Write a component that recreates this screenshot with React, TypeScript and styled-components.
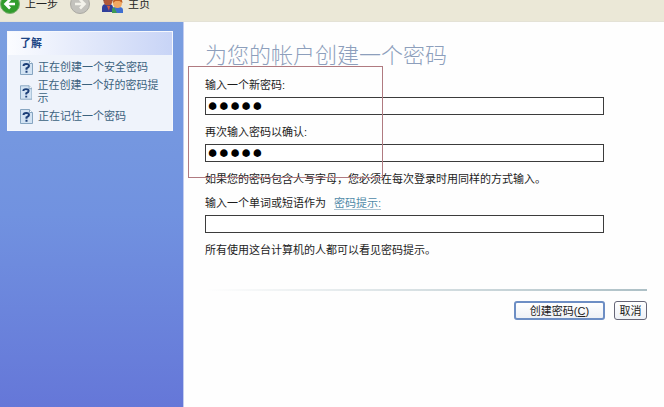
import React from "react";
import styled, { createGlobalStyle } from "styled-components";

const GlobalStyle = createGlobalStyle`
  * { box-sizing: border-box; }
  body {
    margin: 0;
    background: #fefefe;
    color: #1c1c1c;
    font: 11px/14px "Liberation Sans", "Noto Sans CJK SC", sans-serif;
  }
`;

const Page = styled.div`
  display: flex;
  flex-direction: column;
  min-height: 100vh;
`;

const Toolbar = styled.header`
  height: 22px;
  overflow: hidden;
  background: #ebe8d7;
  border-bottom: 1px solid #e4e2d6;
`;

const ToolbarRow = styled.div`
  display: flex;
  align-items: center;
  height: 22px;
  margin-top: -7px;
`;

const ToolButton = styled.button`
  display: flex;
  align-items: center;
  gap: 5px;
  padding: 0;
  margin-right: 12px;
  border: 0;
  background: none;
  font: inherit;
  color: #222;
`;

const Columns = styled.div`
  display: flex;
  flex: 1;
`;

const Sidebar = styled.aside`
  flex: 0 0 184px;
  padding: 9px 10px 0 7px;
  border-right: 1px solid #c3cdf0;
  background: linear-gradient(#7b9fe0 0%, #7192e0 50%, #6577d8 100%);
`;

const Card = styled.section`
  background: #eff3fb;
  border: 1px solid #f6f8fd;
`;

const CardTitle = styled.h2`
  margin: 0;
  padding: 4px 12px 5px;
  background: linear-gradient(90deg, #fbfcff, #c8d4f6);
  color: #1d4585;
  font-size: 11px;
  line-height: 14px;
  font-weight: 700;
`;

const TopicList = styled.ul`
  list-style: none;
  margin: 0;
  padding: 5px 8px 6px 12px;
`;

const Topic = styled.li`
  display: flex;
  align-items: center;
  gap: 5px;
  margin-bottom: 4px;
  &:last-child { margin-bottom: 0; }
`;

const TopicLink = styled.a`
  color: #3b627e;
  text-decoration: none;
  line-height: 13px;
`;

const Content = styled.main`
  flex: 1;
  min-width: 0;
  padding: 20px 17px 0 21px;
`;

const Title = styled.h1`
  margin: 0 0 8px;
  color: #8d9fbc;
  font-size: 22px;
  line-height: 28px;
  font-weight: 300;
`;

const Form = styled.form`
  position: relative;
`;

const Field = styled.div`
  margin: 0 43px 10px 0;
`;

const Label = styled.label`
  display: block;
  margin-bottom: 5px;
`;

const Input = styled.input`
  display: block;
  width: 100%;
  height: 18px;
  padding: 0 2px;
  border: 1px solid #3c3c3c;
  border-radius: 0;
  background: #fff;
  color: #000;
  outline: 0;
  font: inherit;

  &[type="password"] {
    padding: 0 1px;
    font: 19px/16px "DejaVu Sans", sans-serif;
    -webkit-text-stroke: 2px #000;
  }
`;

const Note = styled.p`
  margin: 0 0 10px;
`;

const HintLink = styled.a`
  margin-left: 5px;
  color: #4f89a8;
  text-decoration: none;
  border-bottom: 1px solid #a9c3d2;
`;

const Highlight = styled.div`
  position: absolute;
  left: -17px;
  top: -12px;
  width: 195px;
  height: 112px;
  border: 1px solid #b07a80;
  pointer-events: none;
`;

const Divider = styled.hr`
  height: 2px;
  margin: 32px 0 10px;
  border: 0;
  background: linear-gradient(90deg, #fefefe, #adc0c6);
`;

const Actions = styled.div`
  display: flex;
  justify-content: flex-end;
  gap: 9px;
`;

const ActionButton = styled.button<{ $primary?: boolean }>`
  height: 19px;
  width: ${(p) => (p.$primary ? "91px" : "33px")};
  padding: 0;
  border: ${(p) => (p.$primary ? "2px solid #6d8ec4" : "1px solid #667")};
  border-radius: 3px;
  background: linear-gradient(#fff, #eef1f6);
  color: #222;
  font: inherit;
  line-height: 14px;
  white-space: nowrap;
`;

const BackIcon = () => (
  <svg width="20" height="20" viewBox="0 0 20 20" aria-hidden="true">
    <circle cx="10" cy="10" r="9.5" fill="#319c2c" stroke="#7cae70" />
    <path d="M15 10H6M10 5.500L5.500 10l4.500 4.500" fill="none" stroke="#fff" strokeWidth="2.600" />
  </svg>
);

const ForwardIcon = () => (
  <svg width="20" height="20" viewBox="0 0 20 20" aria-hidden="true">
    <circle cx="10" cy="10" r="9.500" fill="#c3c2bd" stroke="#aaa9a3" />
    <path d="M5 10h9M10 5.500l4.500 4.500-4.500 4.500" fill="none" stroke="#f3f2eb" strokeWidth="2.600" />
  </svg>
);

const UsersIcon = () => (
  <svg width="21" height="20" viewBox="0 0 21 20" aria-hidden="true">
    <path d="M0 18v-4q0-4 4-4h3q4 0 4 4v4z" fill="#2f3f9c" />
    <circle cx="6" cy="7" r="4.500" fill="#b0583a" />
    <path d="M1.500 7q0-5.500 4.500-5.500t4.500 5.500l-2-2H3.500z" fill="#3c1d1c" />
    <path d="M10 19v-3q0-3 4-3h3q4 0 4 3v3z" fill="#3f6fd0" />
    <path d="M10 19v-3q0-2 2-3l3 6z" fill="#3f9a55" />
    <circle cx="15.500" cy="9.500" r="4.500" fill="#f0a862" />
    <path d="M11 9q0-6 4.500-6t5 6l-3-2h-4z" fill="#c05f22" />
    <path d="M5 12h3l-1 5z" fill="#d05a42" />
  </svg>
);

const HelpIcon = () => (
  <svg width="13" height="15" viewBox="0 0 13 15" aria-hidden="true">
    <path d="M.5.500h9l3 3v11H.5z" fill="#d3e3f3" stroke="#86a5c1" />
    <path d="M9.500.500v3h3" fill="#fff" stroke="#86a5c1" />
    <path d="M3.500 6Q3.500 4 6.300 4T9 6Q9 7.200 6.500 8.300v1.400M6.500 10.800v2" fill="none" stroke="#1c3f78" strokeWidth="2" />
  </svg>
);

const topics = ["正在创建一个安全密码", "正在创建一个好的密码提示", "正在记住一个密码"];

export default function App() {
  return (
    <Page>
      <GlobalStyle />
      <Toolbar>
        <ToolbarRow>
          <ToolButton type="button"><BackIcon />上一步</ToolButton>
          <ToolButton type="button" aria-label="前进"><ForwardIcon /></ToolButton>
          <ToolButton type="button"><UsersIcon />主页</ToolButton>
        </ToolbarRow>
      </Toolbar>
      <Columns>
        <Sidebar>
          <Card>
            <CardTitle>了解</CardTitle>
            <TopicList>
              {topics.map((topic) => (
                <Topic key={topic}>
                  <HelpIcon />
                  <TopicLink href="#">{topic}</TopicLink>
                </Topic>
              ))}
            </TopicList>
          </Card>
        </Sidebar>
        <Content>
          <Title>为您的帐户创建一个密码</Title>
          <Form onSubmit={(e) => e.preventDefault()}>
            <Field>
              <Label htmlFor="password">输入一个新密码:</Label>
              <Input id="password" type="password" defaultValue="abcde" />
            </Field>
            <Field>
              <Label htmlFor="confirm">再次输入密码以确认:</Label>
              <Input id="confirm" type="password" defaultValue="abcde" />
            </Field>
            <Note>如果您的密码包含人写字母，您必须在每次登录时用同样的方式输入。</Note>
            <Field>
              <Label htmlFor="hint">
                输入一个单词或短语作为 <HintLink href="#">密码提示:</HintLink>
              </Label>
              <Input id="hint" type="text" />
            </Field>
            <Note>所有使用这台计算机的人都可以看见密码提示。</Note>
            <Highlight />
            <Divider />
            <Actions>
              <ActionButton type="submit" $primary>创建密码(<u>C</u>)</ActionButton>
              <ActionButton type="button">取消</ActionButton>
            </Actions>
          </Form>
        </Content>
      </Columns>
    </Page>
  );
}
